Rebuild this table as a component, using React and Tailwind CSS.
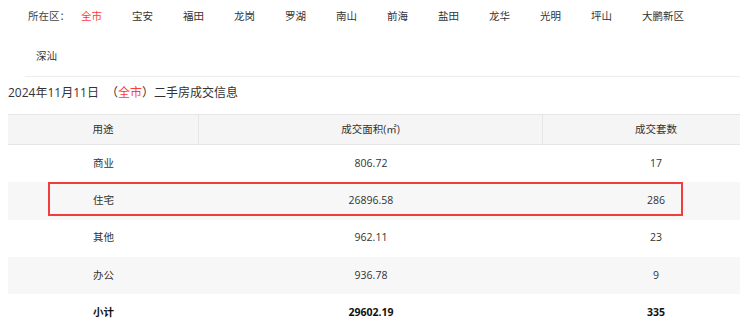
import React from 'react';

const districts = ['全市', '宝安', '福田', '龙岗', '罗湖', '南山', '前海', '盐田', '龙华', '光明', '坪山', '大鹏新区', '深汕'];

const rows = [
  { use: '商业', area: '806.72', count: '17' },
  { use: '住宅', area: '26896.58', count: '286' },
  { use: '其他', area: '962.11', count: '23' },
  { use: '办公', area: '936.78', count: '9' },
];

const font = { fontFamily: '"Open Sans", "Noto Sans CJK SC", sans-serif' };

export default function App() {
  return (
    <div className="w-[740px] h-[331px] overflow-hidden bg-white text-[#333]" style={font}>
      {/* district filter */}
      <div className="ml-[25px] pb-[2px] border-b border-[#ececec]">
        <div className="flex flex-wrap gap-y-[6px] text-[10.5px]">
          <div className="h-[34px] flex items-center pl-[3px] text-[#444]">所在区：</div>
          {districts.map((d, i) => (
            <div
              key={d}
              className={`h-[34px] flex items-center pl-[11px] pr-[19px] cursor-pointer ${i === 0 ? 'text-[#ff3b3b]' : 'text-[#333]'}`}
            >
              {d}
            </div>
          ))}
        </div>
      </div>

      <div className="pl-[8px] pt-[9px] mb-[14px] leading-[14px] text-[12px] text-[#333]">
        2024年11月11日<span className="ml-[7px]">（</span>
        <span className="text-[#ff3b3b]">全市</span>）二手房成交信息
      </div>

      <div className="relative ml-[8px] w-[761px] text-[10.5px]">
        <div className="grid grid-cols-[191px_344px_226px] h-[31px] bg-[#f5f5f5] border-y border-[#e6e6e6] text-[#333]">
          <div className="flex items-center justify-center border-r border-[#e6e6e6]">用途</div>
          <div className="flex items-center justify-center border-r border-[#e6e6e6]">成交面积(㎡)</div>
          <div className="flex items-center justify-center">成交套数</div>
        </div>
        {rows.map((r, i) => (
          <div
            key={r.use}
            className={`grid grid-cols-[191px_344px_226px] h-[37.3px] ${i % 2 === 1 ? 'bg-[#f7f7f7]' : 'bg-white'}`}
          >
            <div className="flex items-center justify-center">{r.use}</div>
            <div className="flex items-center justify-center">{r.area}</div>
            <div className="flex items-center justify-center">{r.count}</div>
          </div>
        ))}
        <div className="grid grid-cols-[191px_344px_226px] h-[37.3px] font-bold text-[#111]">
          <div className="flex items-center justify-center">小计</div>
          <div className="flex items-center justify-center">29602.19</div>
          <div className="flex items-center justify-center">335</div>
        </div>

        {/* highlight annotation */}
        <div className="absolute left-[40px] top-[68px] w-[635px] h-[34px] border-2 border-[#f23d3d] pointer-events-none" />
      </div>
    </div>
  );
}
